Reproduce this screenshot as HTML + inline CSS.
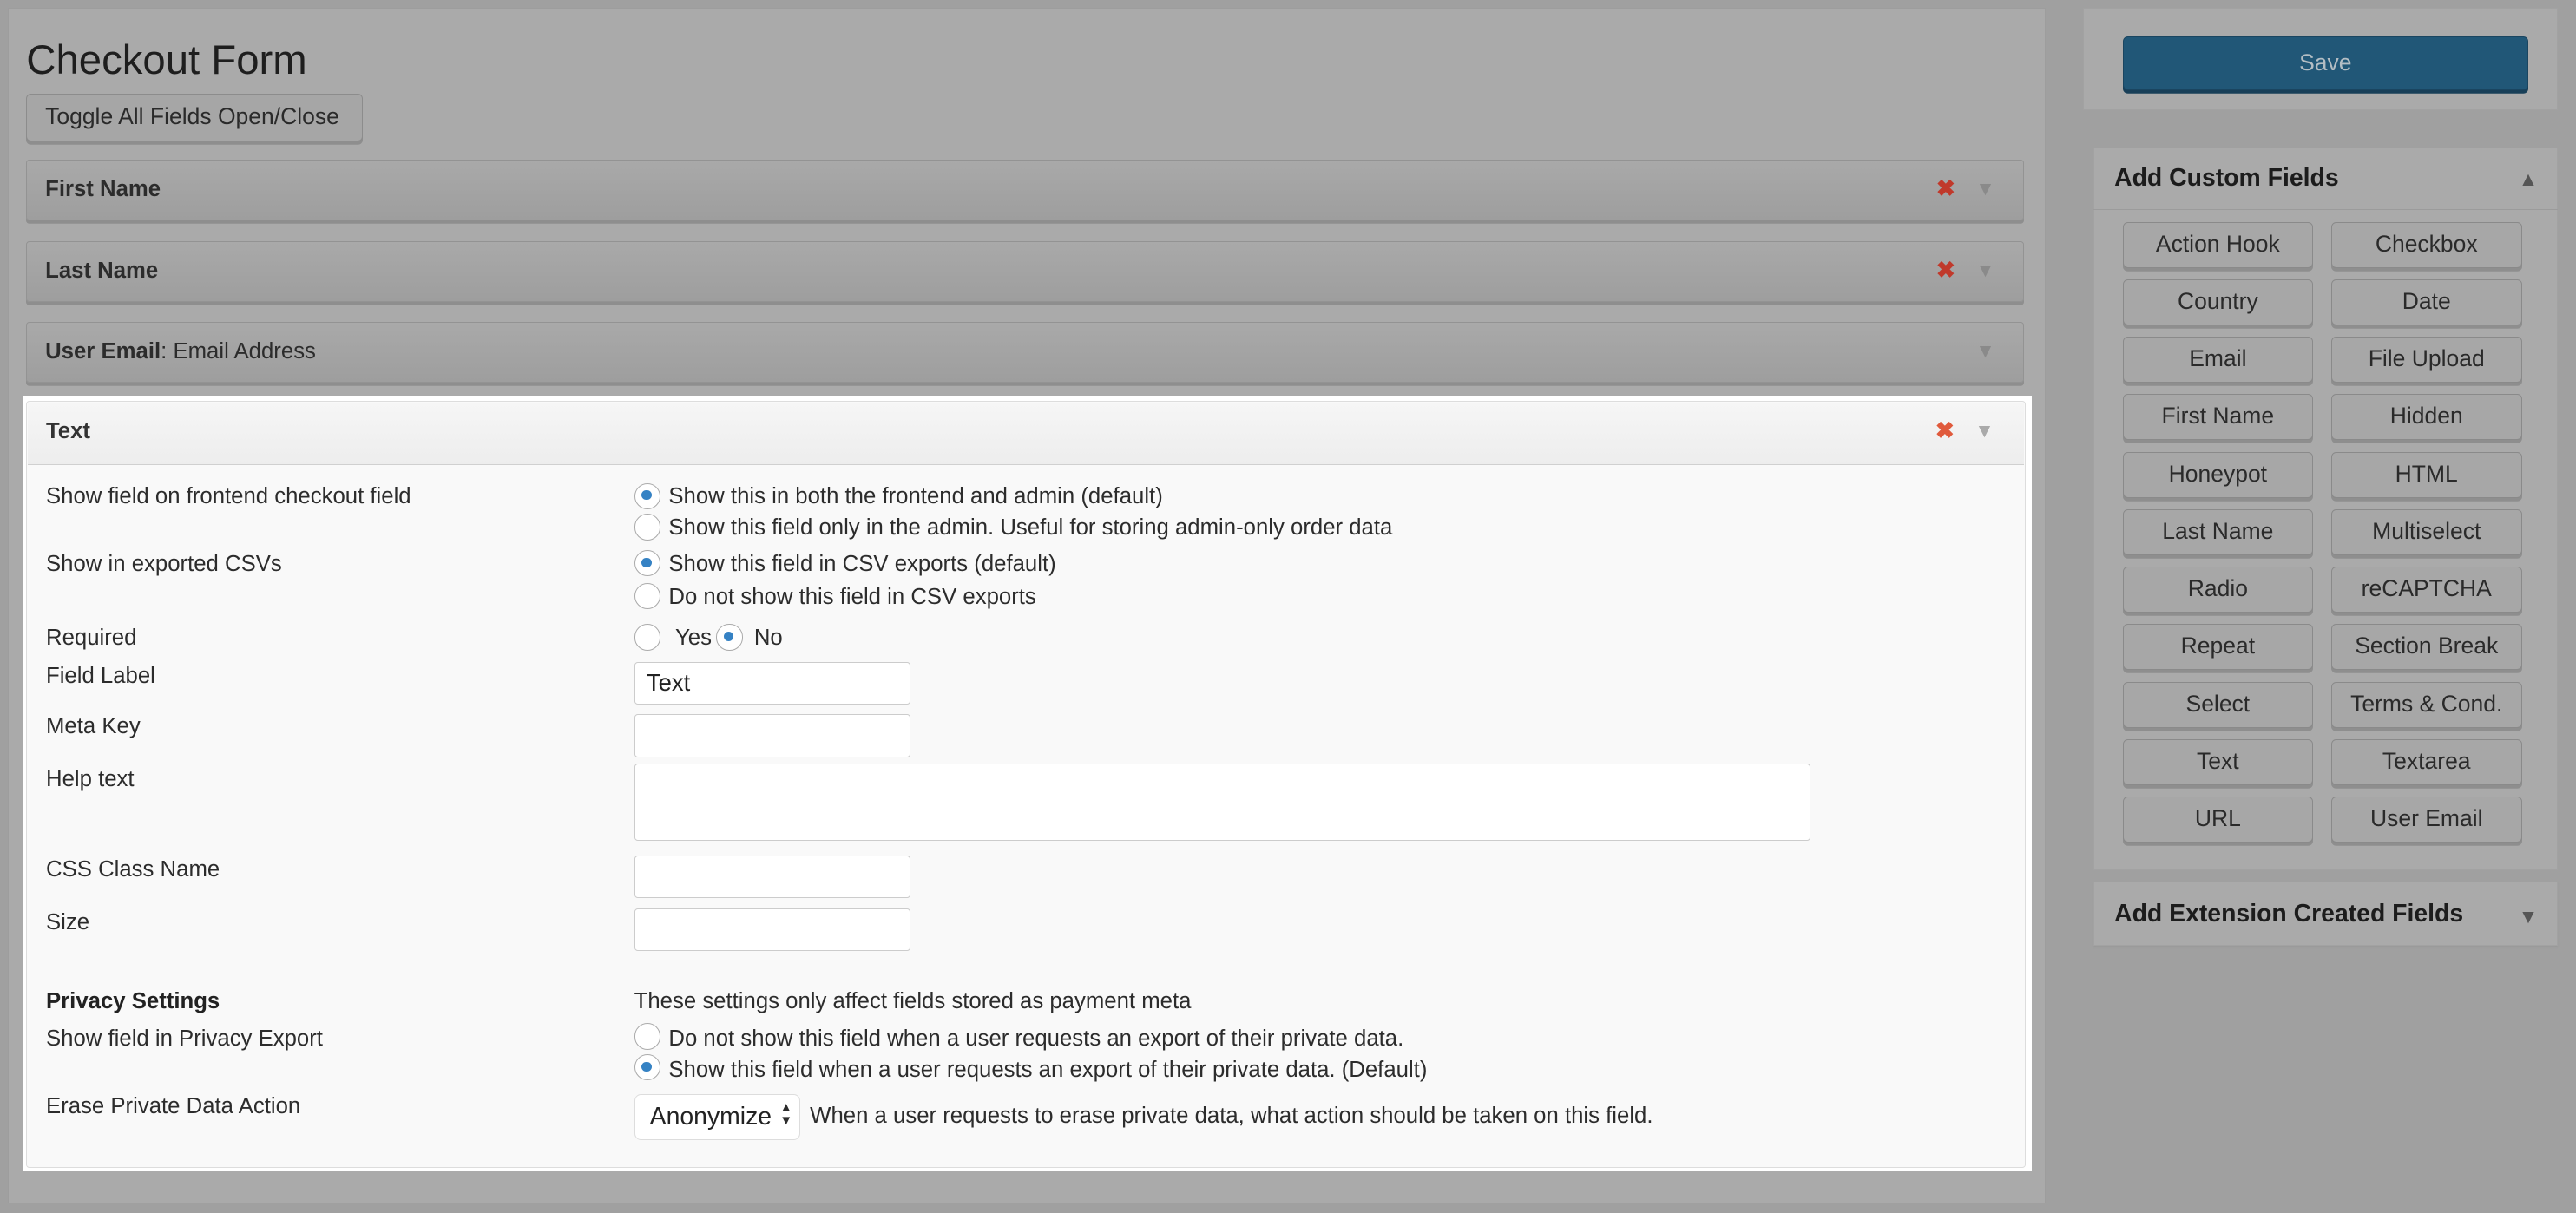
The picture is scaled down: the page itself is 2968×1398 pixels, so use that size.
<!DOCTYPE html>
<html><head><meta charset="utf-8"><style>
*{box-sizing:border-box;margin:0;padding:0}
html,body{width:2968px;height:1398px;overflow:hidden;background:#a0a0a0}
#z{zoom:1.89286;position:relative;width:1568px;height:739px;font-family:"Liberation Sans",sans-serif;font-size:13.6px;color:#2c2c2c}
.a{position:absolute;white-space:nowrap}
.row{position:absolute;left:16px;width:1216px;height:37px;border:1px solid #939393;border-radius:2px;background:linear-gradient(#a9a9a9,#9e9e9e);box-shadow:0 2px 0 #8e8e8e}
.row .t{position:absolute;left:11px;top:10px;font-size:13.6px}
.x{position:absolute;color:#c0392b;font-weight:bold;font-size:14px}
.tri{position:absolute;color:#8a8a8a;font-size:12px}
.rad{position:absolute;width:16px;height:16px;border:1px solid #aaa;border-radius:50%;background:#fff}
.rad.on::after{content:"";position:absolute;left:4px;top:4px;width:6px;height:6px;border-radius:50%;background:#3582c4}
.inp{position:absolute;left:386px;width:168px;height:26px;border:1px solid #ccc;background:#fff;border-radius:2px}
.btn{position:absolute;width:116px;height:28px;border:1px solid #8a8a8a;border-radius:3px;background:#a7a7a7;box-shadow:0 2px 0 #8e8e8e;text-align:center;line-height:26px;font-size:14px;color:#2a2a2a}
</style></head><body><div id="z">
<div class="a" style="left:5px;top:5px;width:1240px;height:728px;background:#aaa;border:1px solid #9d9d9d"></div>
<div class="a" style="left:16px;top:22px;font-size:25px;color:#1e1e1e">Checkout Form</div>
<div class="a" style="left:16px;top:57px;width:205px;height:29px;border:1px solid #8c8c8c;border-radius:3px;background:#a6a6a6;box-shadow:0 2px 0 #8e8e8e;font-size:14px;line-height:27px;padding-left:11px;color:#2a2a2a">Toggle All Fields Open/Close</div>
<div class="row" style="top:97px"><span class="t"><b>First Name</b></span><span class="x" style="left:1162px;top:9px">✖</span><span class="tri" style="left:1186px;top:10px">▼</span></div>
<div class="row" style="top:147px"><span class="t"><b>Last Name</b></span><span class="x" style="left:1162px;top:9px">✖</span><span class="tri" style="left:1186px;top:10px">▼</span></div>
<div class="row" style="top:196px"><span class="t"><b>User Email</b>: Email Address</span><span class="tri" style="left:1186px;top:10px">▼</span></div>

<div class="a" style="left:14px;top:241px;width:1223px;height:472px;background:#fff"></div>
<div class="a" style="left:16px;top:244px;width:1217px;height:467px;background:#f9f9f9;border:1px solid #ddd;border-radius:2px"></div>
<div class="a" style="left:17px;top:245px;width:1215px;height:38px;background:linear-gradient(#f6f6f6,#ededed);border-bottom:1px solid #d0d0d0"></div>
<div class="a" style="left:28px;top:255px;font-weight:bold;color:#333">Text</div>
<span class="x a" style="left:1178px;top:254px;color:#e05a3c">✖</span><span class="tri a" style="left:1202px;top:255px;color:#aaa">▼</span>

<div class="a" style="left:28px;top:295px">Show field on frontend checkout field</div>
<div class="rad on" style="left:386px;top:294px"></div><div class="a" style="left:407px;top:295px">Show this in both the frontend and admin (default)</div>
<div class="rad" style="left:386px;top:313px"></div><div class="a" style="left:407px;top:314px">Show this field only in the admin. Useful for storing admin-only order data</div>
<div class="a" style="left:28px;top:336px">Show in exported CSVs</div>
<div class="rad on" style="left:386px;top:335px"></div><div class="a" style="left:407px;top:336px">Show this field in CSV exports (default)</div>
<div class="rad" style="left:386px;top:355px"></div><div class="a" style="left:407px;top:356px">Do not show this field in CSV exports</div>
<div class="a" style="left:28px;top:381px">Required</div>
<div class="rad" style="left:386px;top:380px"></div><div class="a" style="left:411px;top:381px">Yes</div>
<div class="rad on" style="left:436px;top:380px"></div><div class="a" style="left:459px;top:381px">No</div>
<div class="a" style="left:28px;top:404px">Field Label</div>
<div class="inp" style="top:403px"><span class="a" style="left:7px;top:4px;font-size:14.5px;color:#222">Text</span></div>
<div class="a" style="left:28px;top:435px">Meta Key</div>
<div class="inp" style="top:435px"></div>
<div class="a" style="left:28px;top:467px">Help text</div>
<div class="inp" style="top:465px;width:716px;height:47px"></div>
<div class="a" style="left:28px;top:522px">CSS Class Name</div>
<div class="inp" style="top:521px"></div>
<div class="a" style="left:28px;top:554px">Size</div>
<div class="inp" style="top:553px"></div>
<div class="a" style="left:28px;top:602px;font-weight:bold;color:#222">Privacy Settings</div>
<div class="a" style="left:386px;top:602px">These settings only affect fields stored as payment meta</div>
<div class="a" style="left:28px;top:625px">Show field in Privacy Export</div>
<div class="rad" style="left:386px;top:623px"></div><div class="a" style="left:407px;top:625px">Do not show this field when a user requests an export of their private data.</div>
<div class="rad on" style="left:386px;top:642px"></div><div class="a" style="left:407px;top:644px">Show this field when a user requests an export of their private data. (Default)</div>
<div class="a" style="left:28px;top:666px">Erase Private Data Action</div>
<div class="a" style="left:386px;top:666px;width:101px;height:28px;border:1px solid #ddd;border-radius:4px;background:#fff"><span class="a" style="left:9px;top:5px;font-size:15px;color:#222">Anonymize</span><span class="a" style="left:88px;top:4px;font-size:8px;line-height:8px">▲<br>▼</span></div>
<div class="a" style="left:493px;top:672px">When a user requests to erase private data, what action should be taken on this field.</div>

<div class="a" style="left:1268px;top:5px;width:289px;height:62px;background:#aaa;border:1px solid #a2a2a2"></div>
<div class="a" style="left:1292px;top:22px;width:247px;height:33px;background:#215777;border:1px solid #1a4560;border-radius:3px;box-shadow:0 2px 0 #183f58;color:#b4bec4;text-align:center;line-height:31px;font-size:14px">Save</div>

<div class="a" style="left:1274px;top:90px;width:283px;height:440px;background:#aaa;border:1px solid #a2a2a2"></div>
<div class="a" style="left:1274px;top:90px;width:283px;height:38px;border-bottom:1px solid #9b9b9b"></div>
<div class="a" style="left:1287px;top:100px;font-size:15px;font-weight:bold;color:#1c1c1c">Add Custom Fields</div>
<div class="a" style="left:1533px;top:102px;font-size:12px;color:#555">▲</div>
<div class="btn" style="left:1292px;top:135px">Action Hook</div><div class="btn" style="left:1419px;top:135px">Checkbox</div>
<div class="btn" style="left:1292px;top:170px">Country</div><div class="btn" style="left:1419px;top:170px">Date</div>
<div class="btn" style="left:1292px;top:205px">Email</div><div class="btn" style="left:1419px;top:205px">File Upload</div>
<div class="btn" style="left:1292px;top:240px">First Name</div><div class="btn" style="left:1419px;top:240px">Hidden</div>
<div class="btn" style="left:1292px;top:275px">Honeypot</div><div class="btn" style="left:1419px;top:275px">HTML</div>
<div class="btn" style="left:1292px;top:310px">Last Name</div><div class="btn" style="left:1419px;top:310px">Multiselect</div>
<div class="btn" style="left:1292px;top:345px">Radio</div><div class="btn" style="left:1419px;top:345px">reCAPTCHA</div>
<div class="btn" style="left:1292px;top:380px">Repeat</div><div class="btn" style="left:1419px;top:380px">Section Break</div>
<div class="btn" style="left:1292px;top:415px">Select</div><div class="btn" style="left:1419px;top:415px">Terms &amp; Cond.</div>
<div class="btn" style="left:1292px;top:450px">Text</div><div class="btn" style="left:1419px;top:450px">Textarea</div>
<div class="btn" style="left:1292px;top:485px">URL</div><div class="btn" style="left:1419px;top:485px">User Email</div>

<div class="a" style="left:1274px;top:537px;width:283px;height:39px;background:#aaa;border:1px solid #a2a2a2;box-shadow:0 1px 1px #999"></div>
<div class="a" style="left:1287px;top:548px;font-size:15px;font-weight:bold;color:#1c1c1c">Add Extension Created Fields</div>
<div class="a" style="left:1533px;top:551px;font-size:12px;color:#555">▼</div>
</div></body></html>
